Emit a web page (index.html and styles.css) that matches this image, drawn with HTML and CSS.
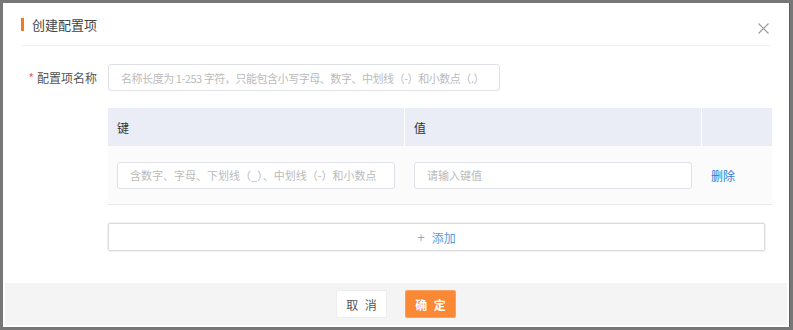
FILE: index.html
```html
<!DOCTYPE html>
<html lang="zh">
<head>
<meta charset="utf-8">
<link rel="stylesheet" href="styles.css">
</head>
<body>
<div class="dialog">
  <div class="header">
    <span class="bar"></span>
    <span class="title">创建配置项</span>
    <span class="close"><svg width="11" height="11" viewBox="0 0 11 11"><path d="M0.5 0.5L10.5 10.5M10.5 0.5L0.5 10.5" stroke="#9a9a9a" stroke-width="1.2" fill="none"/></svg></span>
  </div>
  <div class="body">
    <div class="form-row">
      <label class="label"><span class="req">*</span>配置项名称</label>
      <div class="input name-input"><span class="ph tight">名称长度为 1-253 字符，只能包含小写字母、数字、中划线（-）和小数点（.）</span></div>
    </div>
    <div class="table">
      <div class="thead">
        <div class="th key">键</div>
        <div class="th val">值</div>
        <div class="th act"></div>
      </div>
      <div class="trow">
        <div class="td key"><div class="input"><span class="ph">含数字、字母、下划线（_）、中划线（-）和小数点（.）</span></div></div>
        <div class="td val"><div class="input"><span class="ph">请输入键值</span></div></div>
        <div class="td act"><span class="link">删除</span></div>
      </div>
    </div>
    <div class="add"><span class="plus">+</span>添加</div>
  </div>
  <div class="footer">
    <button class="btn cancel">取 消</button>
    <button class="btn ok">确 定</button>
  </div>
</div>
</body>
</html>
```
FILE: styles.css
```css
* { box-sizing: border-box; }
html, body { margin: 0; padding: 0; }
body {
  width: 793px;
  height: 330px;
  background: #777777;
  padding: 3px;
  font-family: "Noto Sans CJK SC", "Noto Sans", sans-serif;
  font-size: 12px;
  color: #333;
  overflow: hidden;
}
.dialog {
  width: 787px;
  height: 324px;
  background: #fff;
  display: flex;
  flex-direction: column;
  border-right: 1px solid #5f5f5f;
}
.header {
  height: 43px;
  margin: 0 18px;
  border-bottom: 1px solid #f1f1f1;
  display: flex;
  align-items: center;
}
.bar {
  width: 3px;
  height: 13px;
  background: #f47a20;
  margin-right: 8px;
  margin-top: 1px;
}
.title {
  font-size: 13px;
  color: #444;
  line-height: 16px;
  margin-top: 1px;
}
.close {
  margin-left: auto;
  margin-right: 2px;
  margin-top: 9px;
  display: flex;
}
.body {
  padding: 18px 0 0 18px;
  flex: 1;
}
.form-row {
  display: flex;
  align-items: center;
}
.label {
  width: 76px;
  text-align: right;
  font-size: 12px;
  color: #555;
  margin-right: 11px;
  white-space: nowrap;
}
.req { color: #f06060; margin-right: 3px; }
.input {
  height: 27px;
  border: 1px solid #dfe1e6;
  border-radius: 3px;
  padding: 0 8px 0 12px;
  display: flex;
  align-items: center;
  background: #fff;
  overflow: hidden;
}
.ph {
  color: #bbbbbb;
  font-size: 11px;
  white-space: nowrap;
  overflow: hidden;
  text-overflow: clip;
  max-width: 100%;
  display: block;
}
.ph.tight { letter-spacing: -0.45px; }
.name-input { width: 392px; padding-right: 4px; }
.table {
  margin: 17px 0 0 87px;
  width: 664px;
}
.thead {
  display: flex;
  height: 38px;
  background: #eaedf5;
}
.th {
  display: flex;
  align-items: center;
  padding-left: 9px;
  font-size: 12px;
  color: #333;
}
.key { width: 297px; border-right: 1px solid #fff; }
.val { width: 297px; border-right: 1px solid #fff; }
.act { flex: 1; }
.trow {
  display: flex;
  height: 59px;
  background: #fbfbfb;
  border-bottom: 1px solid #eaeaea;
}
.td {
  display: flex;
  align-items: center;
  padding: 0 9px;
}
.td.key, .td.val { border-right: 1px solid #fbfbfb; }
.td .input { width: 278px; padding-right: 16px; }
.td.act { padding-left: 9px; }
.link { color: #2b7bd6; font-size: 12px; }
.add {
  margin: 18px 0 0 87px;
  width: 657px;
  height: 28px;
  border: 1px solid #dcdcdc;
  border-radius: 2px;
  display: flex;
  align-items: center;
  justify-content: center;
  color: #5b9be0;
  font-size: 12px;
  box-shadow: 0 0 0 0.5px #e6e6e6;
}
.plus {
  font-size: 14px;
  margin-right: 7px;
  font-weight: 300;
  color: #6aa3e2;
  line-height: 1;
}
.footer {
  height: 42px;
  margin: 0 2px 2px 2px;
  background: #f4f4f4;
  display: flex;
  justify-content: center;
  align-items: center;
  gap: 18px;
}
.btn {
  width: 51px;
  height: 28px;
  border-radius: 2px;
  font-family: "Noto Sans CJK SC", "Noto Sans", sans-serif;
  font-size: 12px;
  letter-spacing: 2px;
  text-indent: 2px;
  padding: 0;
  cursor: pointer;
}
.cancel {
  background: #fff;
  border: 1px solid #eeeeee;
  color: #555;
}
.ok {
  background: #fb8834;
  border: 1px solid #f7a061;
  color: #fff;
  font-weight: bold;
}
```
